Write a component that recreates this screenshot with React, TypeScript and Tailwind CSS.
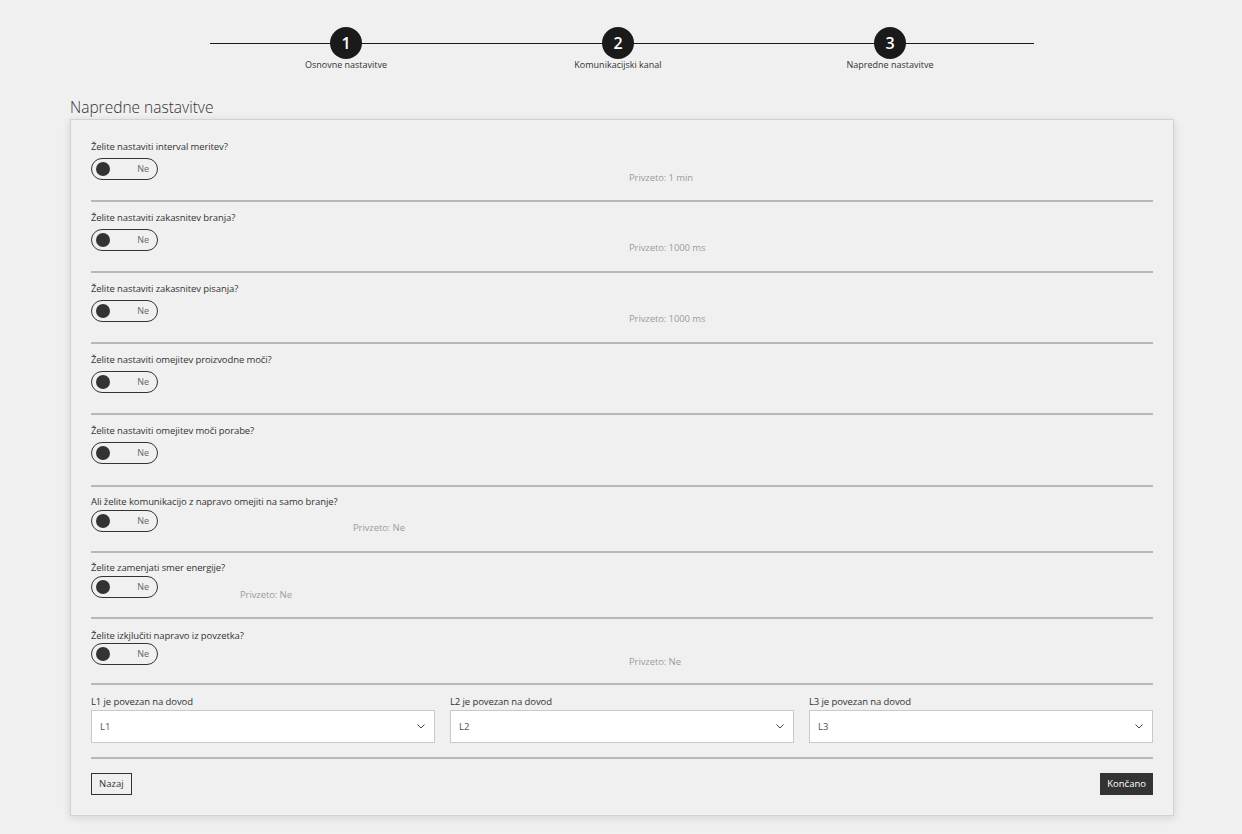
import * as React from 'react';

type Row = {
  label: string;
  privzeto?: string;
  offset?: string;
  spacing: string;
  bottom: string;
};

const loose = { spacing: 'pt-[9px]', bottom: 'mt-[4px] mb-[20px]' };
const tight = { spacing: 'pt-[8px]', bottom: 'mt-[1px] mb-[19px]' };

const rows: Row[] = [
  { label: 'Želite nastaviti interval meritev?', privzeto: 'Privzeto: 1 min', offset: 'ml-[471px] mt-[13px]', ...loose },
  { label: 'Želite nastaviti zakasnitev branja?', privzeto: 'Privzeto: 1000 ms', offset: 'ml-[471px] mt-[12px]', ...loose },
  { label: 'Želite nastaviti zakasnitev pisanja?', privzeto: 'Privzeto: 1000 ms', offset: 'ml-[471px] mt-[12px]', ...loose },
  { label: 'Želite nastaviti omejitev proizvodne moči?', ...loose },
  { label: 'Želite nastaviti omejitev moči porabe?', spacing: 'pt-[9px] pb-[1px]', bottom: loose.bottom },
  { label: 'Ali želite komunikacijo z napravo omejiti na samo branje?', privzeto: 'Privzeto: Ne', offset: 'ml-[195px] mt-[11px]', ...tight },
  { label: 'Želite zamenjati smer energije?', privzeto: 'Privzeto: Ne', offset: 'ml-[82px] mt-[12px]', ...tight },
  { label: 'Želite izkjlučiti napravo iz povzetka?', privzeto: 'Privzeto: Ne', offset: 'ml-[471px] mt-[12px]', spacing: 'pt-[10px]', bottom: 'mt-[0px] mb-[18px]' },
];

const steps = ['Osnovne nastavitve', 'Komunikacijski kanal', 'Napredne nastavitve'];

const Toggle = () => (
  <div className="flex h-[22px] w-[67px] shrink-0 items-center justify-between rounded-full border border-[#333] pl-[4px] pr-[8px]">
    <div className="h-[14px] w-[14px] rounded-full bg-[#333]" />
    <span className="text-[9px] leading-[12px] text-[#6e6262]">Ne</span>
  </div>
);

const Divider = () => <div className="h-[2px] bg-[#b8b8b8]" />;

const Chevron = () => (
  <svg width="8" height="5" viewBox="0 0 8 5" fill="none">
    <path d="M0.5 0.5L4 4L7.5 0.5" stroke="#444" strokeWidth="1" />
  </svg>
);

const SelectBox = ({ label, value }: { label: string; value: string }) => (
  <div>
    <div className="mb-[1px] text-[9.5px] leading-[14px] tracking-[-0.1px] text-[#333]">{label}</div>
    <div className="flex h-[33px] items-center justify-between border border-[#c9c9c9] bg-white pl-[8px] pr-[9px]">
      <span className="text-[9.5px] leading-[14px] text-[#5a4d4d]">{value}</span>
      <Chevron />
    </div>
  </div>
);

export default function App() {
  return (
    <div className="min-h-[834px] bg-[#f0f0f0] pt-[27px] font-['Open_Sans',sans-serif] text-[#333]">
      {/* stepper */}
      <div className="relative ml-[210px] w-[824px]">
        <div className="absolute left-0 right-0 top-[15.5px] h-[1.5px] bg-[#1a1a1a]" />
        <div className="relative grid w-[816px] grid-cols-3">
          {steps.map((s, i) => (
            <div key={s} className="flex flex-col items-center">
              <div className="flex h-[32px] w-[32px] items-center justify-center rounded-full bg-[#1a1a1a] text-[16px] font-semibold leading-none text-white">
                {i + 1}
              </div>
              <div className="text-[9px] leading-[12px] text-[#333]">{s}</div>
            </div>
          ))}
        </div>
      </div>

      <div className="ml-[70px] mt-[25px] w-[1104px]">
        <h2 className="mb-[1px] text-[15.5px] leading-[22px] font-light text-[#333]">Napredne nastavitve</h2>
        <div className="border border-[#d2d2d2] bg-[#f0f0f0] px-[20px] pt-[11px] pb-[20px] shadow-[0_2px_8px_rgba(0,0,0,0.12)]">
          {rows.map((r) => (
            <div key={r.label}>
              <div className={r.spacing}>
                <div className="text-[9.5px] leading-[14px] tracking-[-0.1px] text-[#333]">{r.label}</div>
                <div className={`flex h-[22px] items-start ${r.bottom}`}>
                  <Toggle />
                  {r.privzeto && (
                    <span className={`text-[9.5px] leading-[14px] tracking-[-0.1px] text-[#9c9c9c] ${r.offset}`}>{r.privzeto}</span>
                  )}
                </div>
              </div>
              <Divider />
            </div>
          ))}

          <div className="grid grid-cols-3 gap-[15px] pt-[10px]">
            <SelectBox label="L1 je povezan na dovod" value="L1" />
            <SelectBox label="L2 je povezan na dovod" value="L2" />
            <SelectBox label="L3 je povezan na dovod" value="L3" />
          </div>

          <div className="mt-[14px]">
            <Divider />
          </div>

          <div className="mt-[14px] flex items-center justify-between">
            <button className="h-[22px] border border-[#333] px-[7px] text-[9.5px] leading-[14px] text-[#333]">Nazaj</button>
            <button className="h-[22px] bg-[#333] px-[7px] text-[9.5px] leading-[14px] text-white">Končano</button>
          </div>
        </div>
      </div>
    </div>
  );
}
